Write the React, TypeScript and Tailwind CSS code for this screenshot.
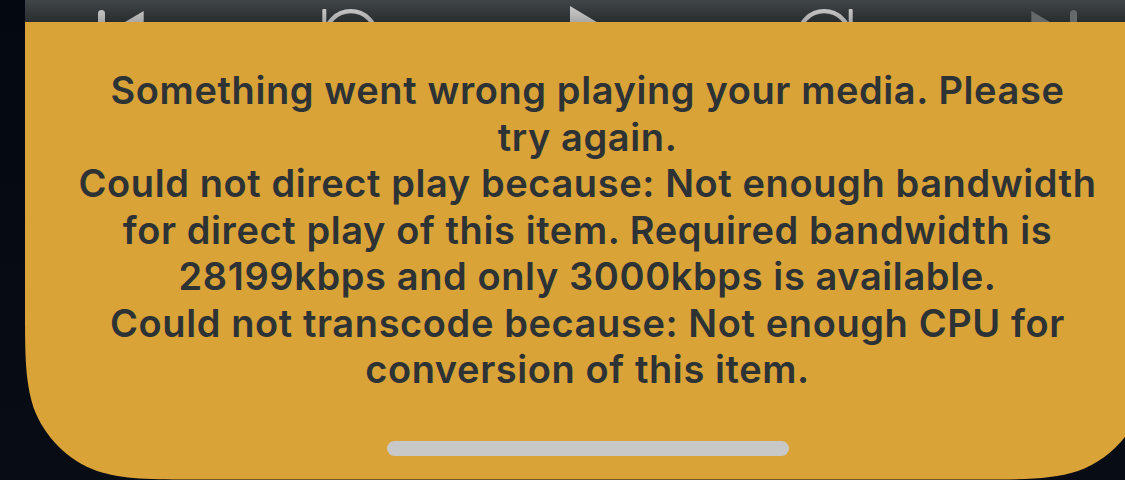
const MESSAGE = [
  'Something went wrong playing your media. Please',
  'try again.',
  'Could not direct play because: Not enough bandwidth',
  'for direct play of this item. Required bandwidth is',
  '28199kbps and only 3000kbps is available.',
  'Could not transcode because: Not enough CPU for',
  'conversion of this item.',
]

function PlayerControls() {
  return (
    <div className="h-[22px] shrink-0 overflow-hidden bg-linear-to-b from-[#404547] to-[#292d2f]">
      <svg className="block" width="1125" height="22" viewBox="25 0 1125 22" fill="none">
        <defs>
          <linearGradient id="metal" gradientUnits="userSpaceOnUse" x1="0" y1="6" x2="0" y2="22">
            <stop stopColor="#cbcbcc" />
            <stop offset="1" stopColor="#a9a9aa" />
          </linearGradient>
        </defs>
        <g fill="url(#metal)">
          <rect x="98" y="10" width="7" height="40" rx="3.5" />
          <path d="M143.7 11v42L108 32z" />
          <path d="M570 6v60L620 36z" />
          <rect x="322.3" y="9" width="4" height="40" rx="1" />
          <rect x="848.7" y="9" width="4" height="40" rx="1" />
        </g>
        <g stroke="url(#metal)" strokeWidth="4.3">
          <circle cx="350.8" cy="36.8" r="25.6" />
          <circle cx="824.2" cy="36.8" r="25.6" />
        </g>
        <g fill="#65696b">
          <path d="M1031.3 11v42l35.7-21z" />
          <rect x="1070" y="10" width="7" height="40" rx="3.5" />
        </g>
      </svg>
    </div>
  )
}

function ErrorBanner() {
  return (
    <div className="flex h-[457.5px] shrink-0 flex-col items-center bg-[#d9a338] pt-[45px] [clip-path:path('M0_0H1125V283.2C1125_333.4_1125_358.5_1116.5_385.5C1105.7_415_1082.5_438.2_1053_449C1026_457.5_1000.9_457.5_950.7_457.5H174.3C124.1_457.5_99_457.5_72_449C42.5_438.2_19.3_415_8.5_385.5C0_358.5_0_333.4_0_283.2Z')]">
      <p className="text-center text-[38px] leading-[46.5px] font-semibold tracking-[0.6px] whitespace-nowrap text-[#2d3235]">
        {MESSAGE.map((line) => (
          <span key={line} className="block">
            {line}
          </span>
        ))}
      </p>
      <div className="mt-[48.5px] h-[15px] w-[402px] rounded-full bg-[#c8c8c8]" />
    </div>
  )
}

export default function App() {
  return (
    <main className="h-[480px] w-[1125px] overflow-hidden bg-linear-to-b from-[#040811] to-[#080d15] pl-[25px] font-['Inter',sans-serif]">
      <div className="flex w-[1125px] flex-col">
        <PlayerControls />
        <ErrorBanner />
      </div>
    </main>
  )
}
